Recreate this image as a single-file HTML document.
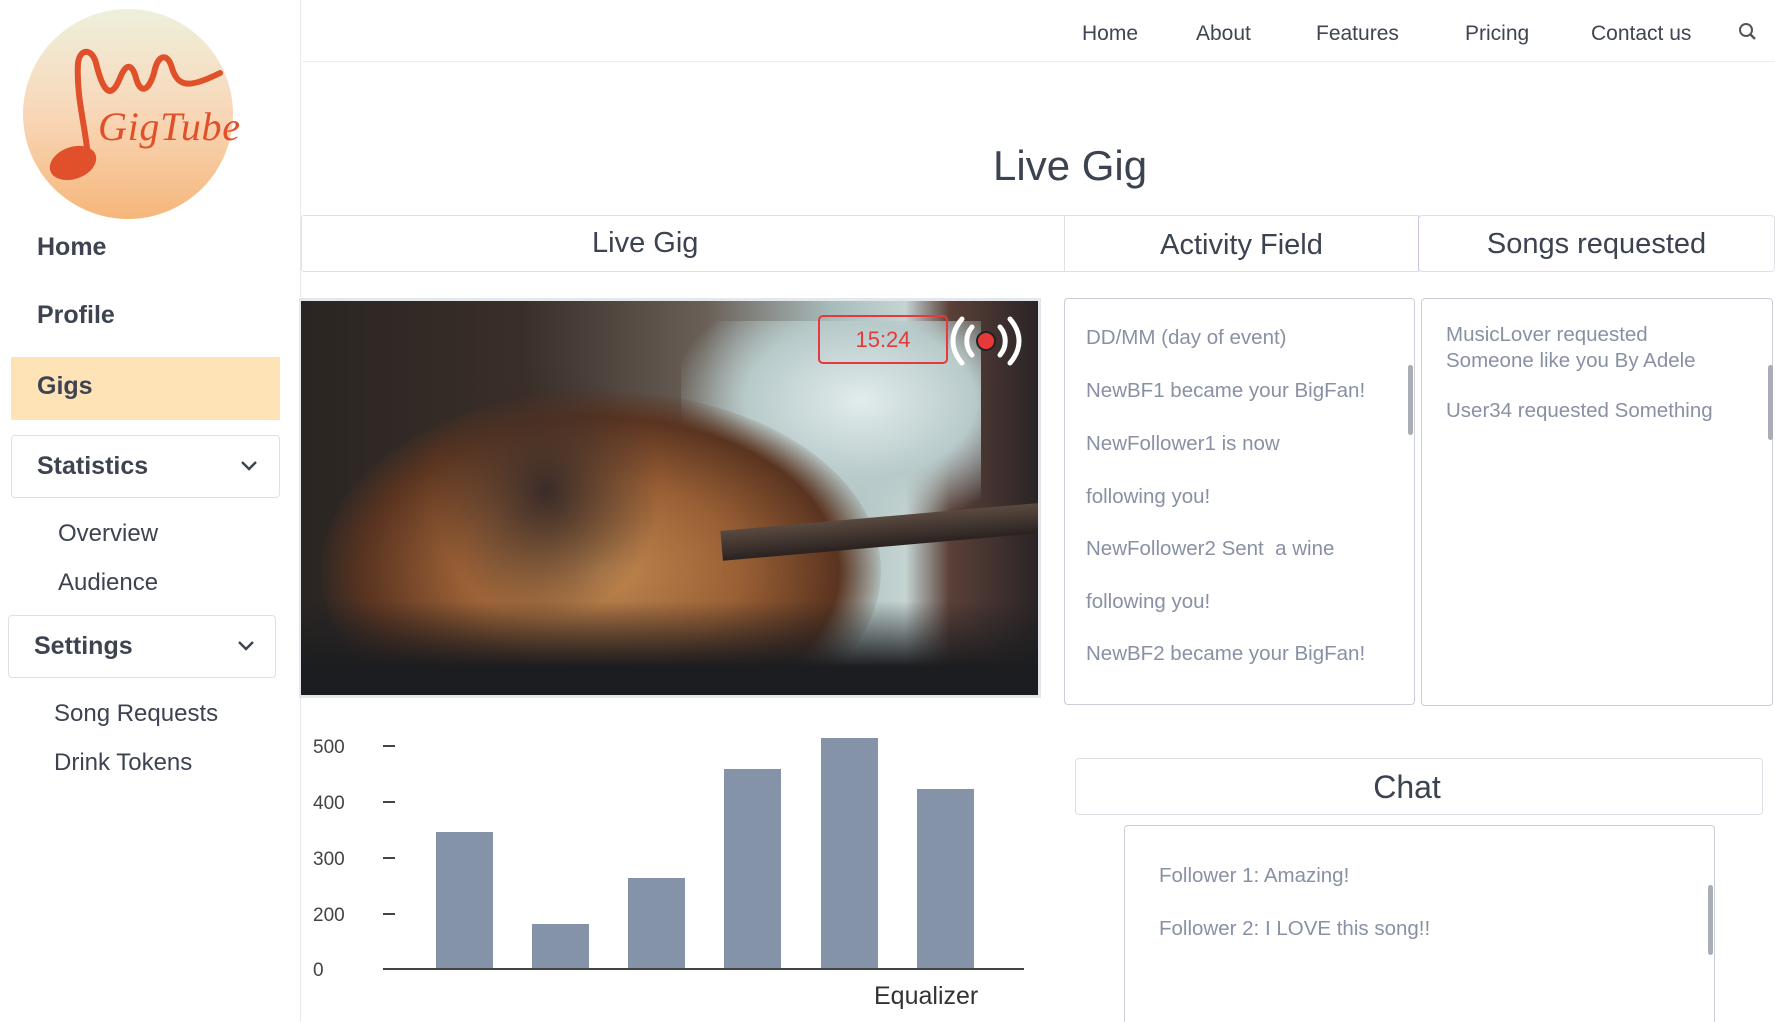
<!DOCTYPE html>
<html><head><meta charset="utf-8"><style>
*{margin:0;padding:0;box-sizing:border-box}
html,body{width:1775px;height:1022px;overflow:hidden}
body{background:#fff;font-family:"Liberation Sans",sans-serif;position:relative;color:#3b4250}
.a{position:absolute;white-space:nowrap}
.side{position:absolute;left:0;top:0;width:301px;height:1022px;border-right:1px solid #e8eaee}
.nav{font-size:21px;color:#3f4552;top:22px}
.sb{font-size:25px;font-weight:bold;color:#3d4350}
.sub{font-size:24px;color:#3d4350}
.box{position:absolute;border:1px solid #dde0e6;border-radius:4px}
.act{font-size:20.5px;color:#8891a4}
.bar{position:absolute;background:#8593a8;width:57px;bottom:53px}
.yl{font-size:19px;color:#444;left:313px}
.tk{position:absolute;left:383px;width:12px;height:2px;background:#444}
</style></head><body>
<div class="side">
<svg class="a" style="left:20px;top:8px" width="230" height="215" viewBox="0 0 230 215">
<defs><linearGradient id="g" x1="0" y1="0" x2="0" y2="1"><stop offset="0" stop-color="#eef0dc"/><stop offset=".5" stop-color="#f8d7b8"/><stop offset="1" stop-color="#f6b67a"/></linearGradient></defs>
<circle cx="108" cy="106" r="105" fill="url(#g)"/>
<path d="M58 55 C60 40 72 40 76 55 C82 80 90 95 100 70 C106 55 112 55 116 70 C120 85 128 85 134 65 C138 45 148 45 152 60 C158 80 170 80 200 65" fill="none" stroke="#e0502a" stroke-width="6" stroke-linecap="round"/>
<path d="M58 55 C56 90 66 120 68 150" fill="none" stroke="#e0502a" stroke-width="6"/>
<ellipse cx="53" cy="155" rx="24" ry="16" fill="#e0502a" transform="rotate(-20 53 155)"/>
<text x="78" y="132" font-family="Liberation Serif,serif" font-style="italic" font-size="40" fill="#e0502a" textLength="142">GigTube</text>
</svg>
<div class="a sb" style="left:37px;top:233px">Home</div>
<div class="a sb" style="left:37px;top:301px">Profile</div>
<div class="a" style="left:11px;top:357px;width:269px;height:63px;background:#fde3b6"></div>
<div class="a sb" style="left:37px;top:372px">Gigs</div>
<div class="box" style="left:11px;top:435px;width:269px;height:63px"></div>
<div class="a sb" style="left:37px;top:452px">Statistics</div>
<svg class="a" style="left:240px;top:460px" width="18" height="12"><path d="M2 2 L9 9 L16 2" fill="none" stroke="#3d4350" stroke-width="2.4"/></svg>
<div class="a sub" style="left:58px;top:520px">Overview</div>
<div class="a sub" style="left:58px;top:569px">Audience</div>
<div class="box" style="left:8px;top:615px;width:268px;height:63px"></div>
<div class="a sb" style="left:34px;top:632px">Settings</div>
<svg class="a" style="left:237px;top:640px" width="18" height="12"><path d="M2 2 L9 9 L16 2" fill="none" stroke="#3d4350" stroke-width="2.4"/></svg>
<div class="a sub" style="left:54px;top:700px">Song Requests</div>
<div class="a sub" style="left:54px;top:749px">Drink Tokens</div>
</div>
<div class="a" style="left:302px;top:61px;width:1473px;height:1px;background:#eceef1"></div>
<div class="a nav" style="left:1082px">Home</div>
<div class="a nav" style="left:1196px">About</div>
<div class="a nav" style="left:1316px">Features</div>
<div class="a nav" style="left:1465px">Pricing</div>
<div class="a nav" style="left:1591px">Contact us</div>
<svg class="a" style="left:1738px;top:22px" width="20" height="20"><circle cx="8" cy="8" r="6" fill="none" stroke="#555" stroke-width="2"/><path d="M12.5 12.5 L17 17" stroke="#555" stroke-width="2.4"/></svg>
<div class="a" style="left:993px;top:142px;font-size:42px;color:#3b4250">Live Gig</div>
<div class="box" style="left:301px;top:215px;width:764px;height:57px;border-radius:3px 0 0 3px"></div>
<div class="box" style="left:1064px;top:215px;width:355px;height:57px;border-radius:0"></div>
<div class="box" style="left:1418px;top:215px;width:357px;height:57px;border-left-color:#c9c4e6"></div>
<div class="a" style="left:592px;top:227px;font-size:29px">Live Gig</div>
<div class="a" style="left:1064px;width:355px;top:229px;text-align:center;font-size:29px">Activity Field</div>
<div class="a" style="left:1418px;width:357px;top:228px;text-align:center;font-size:29px">Songs requested</div>
<div class="a" style="left:299px;top:298px;width:742px;height:400px;background:#e4e7ee"></div>
<div class="a" style="left:301px;top:301px;width:737px;height:394px;overflow:hidden;background:linear-gradient(90deg,#2a2522 0%,#3a2e28 30%,#6a6058 55%,#a8bcbc 72%,#c4d4d2 82%,#5a4038 88%,#2a2426 100%)">
<div class="a" style="left:380px;top:20px;width:300px;height:200px;background:radial-gradient(ellipse at 60% 40%,#e2ecec 0%,#b8caca 45%,rgba(150,160,160,0) 75%)"></div>
<div class="a" style="left:20px;top:90px;width:560px;height:360px;border-radius:50%;background:radial-gradient(ellipse at 50% 50%,#c08850 0%,#9a6035 35%,#5a3420 60%,rgba(30,25,22,0) 72%)"></div>
<div class="a" style="left:130px;top:60px;width:230px;height:260px;background:radial-gradient(ellipse,#3a2c28 0%,rgba(40,35,32,0) 70%)"></div>
<div class="a" style="left:420px;top:215px;width:340px;height:30px;background:linear-gradient(180deg,#5a4a40,#2a2220);transform:rotate(-5deg)"></div>
<div class="a" style="left:0;top:300px;width:737px;height:94px;background:linear-gradient(180deg,rgba(20,20,22,0),#1c1d20 70%)"></div>
</div>
<div class="a" style="left:818px;top:315px;width:130px;height:49px;border:2px solid #e8393a;border-radius:5px;color:#e8393a;font-size:22px;text-align:center;line-height:45px">15:24</div>
<svg class="a" style="left:948px;top:313px" width="76" height="56" viewBox="0 0 76 56"><g fill="none" stroke="#fff" stroke-width="5" stroke-linecap="round"><path d="M14 6 C2 20 2 36 14 50"/><path d="M24 14 C17 22 17 34 24 42"/><path d="M62 6 C74 20 74 36 62 50"/><path d="M52 14 C59 22 59 34 52 42"/></g><circle cx="38" cy="28" r="9" fill="#e8393a" stroke="#222" stroke-width="2"/></svg>
<div class="box" style="left:1064px;top:298px;width:351px;height:407px;border-color:#c9ced8"></div>
<div class="a" style="left:1408px;top:365px;width:5px;height:70px;background:#a9adb5;border-radius:3px"></div>
<div class="a act" style="left:1086px;top:326px">DD/MM (day of event)</div>
<div class="a act" style="left:1086px;top:379px">NewBF1 became your BigFan!</div>
<div class="a act" style="left:1086px;top:432px">NewFollower1 is now</div>
<div class="a act" style="left:1086px;top:485px">following you!</div>
<div class="a act" style="left:1086px;top:537px">NewFollower2 Sent &nbsp;a wine</div>
<div class="a act" style="left:1086px;top:590px">following you!</div>
<div class="a act" style="left:1086px;top:642px">NewBF2 became your BigFan!</div>
<div class="box" style="left:1421px;top:298px;width:352px;height:408px;border-color:#c9ced8"></div>
<div class="a" style="left:1768px;top:365px;width:5px;height:75px;background:#a9adb5;border-radius:3px"></div>
<div class="a act" style="left:1446px;top:323px">MusicLover requested</div>
<div class="a act" style="left:1446px;top:349px">Someone like you By Adele</div>
<div class="a act" style="left:1446px;top:399px">User34 requested Something</div>
<div class="a yl" style="top:737px">500</div>
<div class="a yl" style="top:793px">400</div>
<div class="a yl" style="top:849px">300</div>
<div class="a yl" style="top:905px">200</div>
<div class="a yl" style="top:960px">0</div>
<div class="tk" style="top:745px"></div><div class="tk" style="top:801px"></div><div class="tk" style="top:857px"></div><div class="tk" style="top:913px"></div>
<div class="bar" style="left:436px;height:137px"></div>
<div class="bar" style="left:532px;height:45px"></div>
<div class="bar" style="left:628px;height:91px"></div>
<div class="bar" style="left:724px;height:200px"></div>
<div class="bar" style="left:821px;height:231px"></div>
<div class="bar" style="left:917px;height:180px"></div>
<div class="a" style="left:383px;top:968px;width:641px;height:2px;background:#444"></div>
<div class="a" style="left:874px;top:982px;font-size:25px;color:#333">Equalizer</div>
<div class="box" style="left:1075px;top:758px;width:688px;height:57px"></div>
<div class="a" style="left:1063px;width:688px;top:769px;text-align:center;font-size:32px">Chat</div>
<div class="box" style="left:1124px;top:825px;width:591px;height:197px;border-color:#c9ced8;border-bottom:none;border-radius:4px 4px 0 0"></div>
<div class="a" style="left:1708px;top:885px;width:5px;height:70px;background:#a9adb5;border-radius:3px"></div>
<div class="a act" style="left:1159px;top:864px">Follower 1: Amazing!</div>
<div class="a act" style="left:1159px;top:917px">Follower 2: I LOVE this song!!</div>
</body></html>
